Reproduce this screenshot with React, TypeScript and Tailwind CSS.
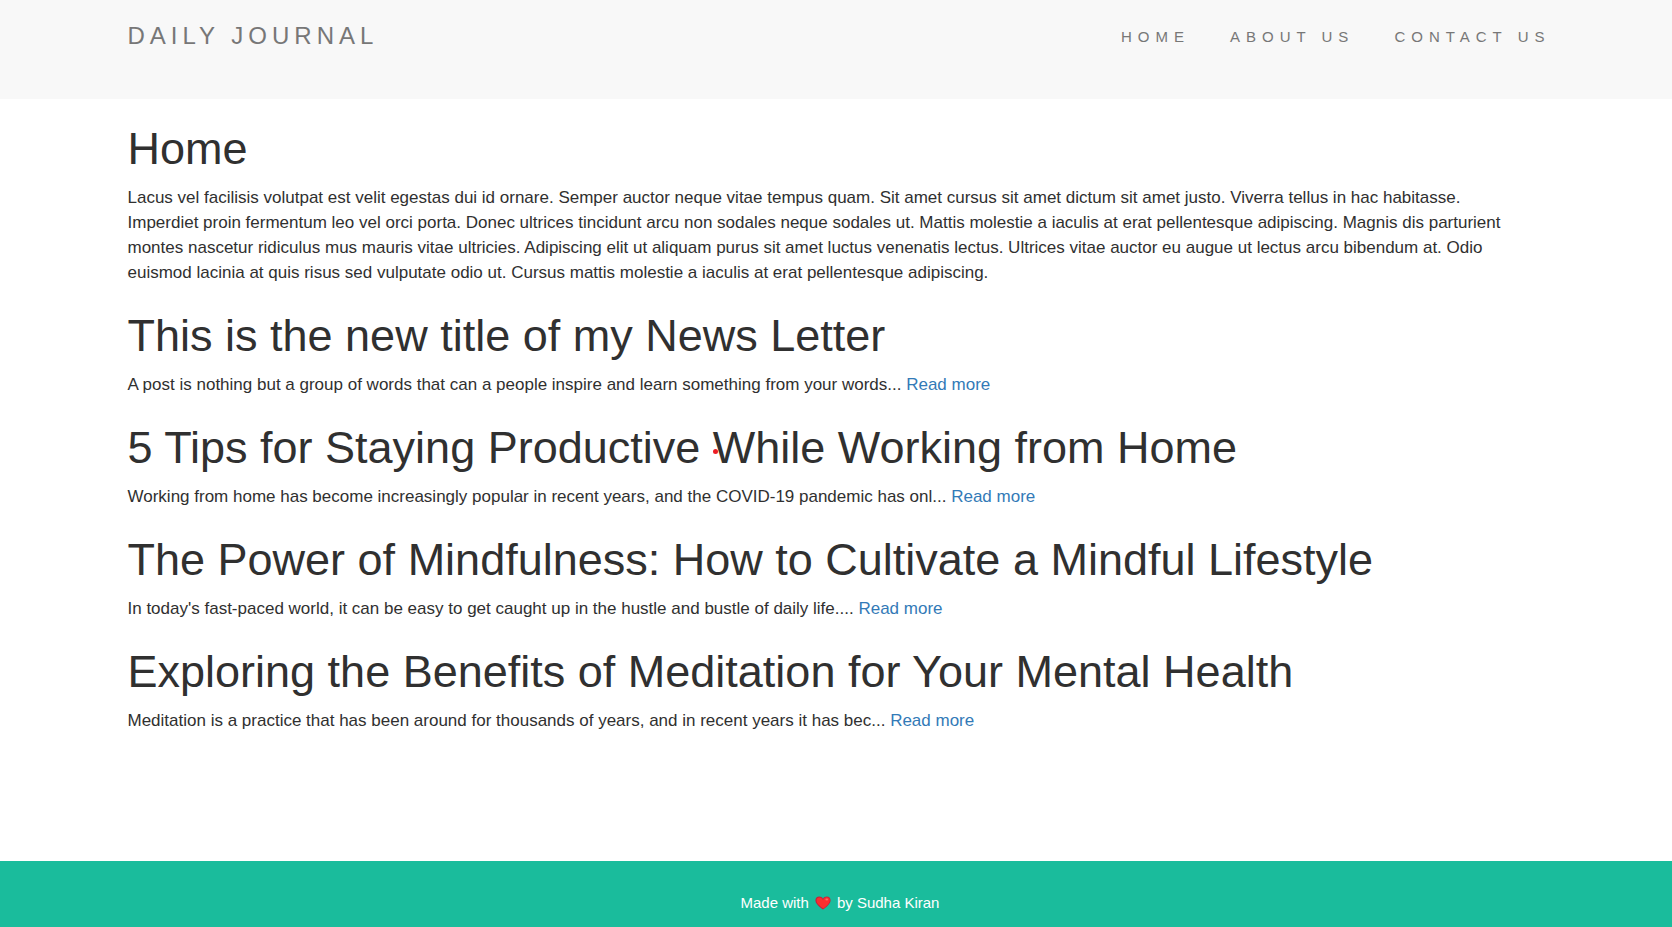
type Post = { title: string; text: string };

const posts: Post[] = [
  { title: "This is the new title of my News Letter", text: "A post is nothing but a group of words that can a people inspire and learn something from your words..." },
  { title: "5 Tips for Staying Productive While Working from Home", text: "Working from home has become increasingly popular in recent years, and the COVID-19 pandemic has onl..." },
  { title: "The Power of Mindfulness: How to Cultivate a Mindful Lifestyle", text: "In today's fast-paced world, it can be easy to get caught up in the hustle and bustle of daily life...." },
  { title: "Exploring the Benefits of Meditation for Your Mental Health", text: "Meditation is a practice that has been around for thousands of years, and in recent years it has bec..." },
];

const heading = "mb-[11px] text-[45px] leading-[50px] font-medium";

function Heart() {
  return (
    <svg viewBox="0 0 16 14" className="mx-[6px] h-[14px] w-4" role="img" aria-label="love">
      <path d="M8 13.6C5.2 11.5.4 8.2.4 4.3.4 2 2 .5 4.2.5 5.900.5 7.300 1.300 8 2.700 8.700 1.300 10.100.5 11.800.5c2.200 0 3.800 1.500 3.800 3.800 0 3.900-4.800 7.200-7.600 9.300Z" fill="#c81e3c" />
      <path d="M8.300 12.600C5.800 10.700 1.600 7.800 1.600 4.500c0-1.800 1.200-3 2.800-3C6 1.500 7.300 2.600 8 4.200 8.700 2.600 10 1.300 11.700 1.300c1.800 0 3.100 1.200 3.100 3 0 3.300-4 6.400-6.500 8.300Z" fill="#f92f2f" />
      <ellipse cx="11.800" cy="3.600" rx="1.400" ry="1" fill="#ff6a61" />
    </svg>
  );
}

export default function App() {
  return (
    <div className="flex min-h-screen flex-col bg-white font-['Liberation_Sans',Arial,sans-serif] text-[17px] leading-[25px] text-[#303030]">
      <nav className="bg-[#f8f8f8] pt-[23px] pb-[50px] text-[#777777]">
        <div className="mx-auto flex max-w-[1463px] items-start justify-between pr-[17px] pl-[23px]">
          <a href="#" className="text-[24px] leading-[25px] tracking-[5px]">DAILY JOURNAL</a>
          <ul className="flex gap-[40px] pt-px text-[15px] leading-[25px] tracking-[6px]">
            <li><a href="#home">HOME</a></li>
            <li><a href="#about">ABOUT US</a></li>
            <li><a href="#contact">CONTACT US</a></li>
          </ul>
        </div>
      </nav>
      <main className="mx-auto flex w-full max-w-[1463px] flex-1 flex-col gap-[26px] px-[23px] pt-[25px]">
        <section>
          <h1 className={heading}>Home</h1>
          <p className="pr-4">Lacus vel facilisis volutpat est velit egestas dui id ornare. Semper auctor neque vitae tempus quam. Sit amet cursus sit amet dictum sit amet justo. Viverra tellus in hac habitasse. Imperdiet proin fermentum leo vel orci porta. Donec ultrices tincidunt arcu non sodales neque sodales ut. Mattis molestie a iaculis at erat pellentesque adipiscing. Magnis dis parturient montes nascetur ridiculus mus mauris vitae ultricies. Adipiscing elit ut aliquam purus sit amet luctus venenatis lectus. Ultrices vitae auctor eu augue ut lectus arcu bibendum at. Odio euismod lacinia at quis risus sed vulputate odio ut. Cursus mattis molestie a iaculis at erat pellentesque adipiscing.</p>
        </section>
        {posts.map((post, index) => (
          <article key={post.title} className="relative">
            <h1 className={heading}>{post.title}</h1>
            {index === 1 && <span className="absolute top-[26px] left-[585px] size-[5px] rounded-full bg-[#ed1c24]" />}
            <p>{post.text} <a href="#post" className="text-[#337ab7]">Read more</a></p>
          </article>
        ))}
      </main>
      <footer className="flex justify-center bg-[#1abc9c] pt-[29px] pb-[12px] pl-[8px] text-[15px] text-white">
        <p className="flex items-center">Made with<Heart />by Sudha Kiran</p>
      </footer>
    </div>
  );
}
